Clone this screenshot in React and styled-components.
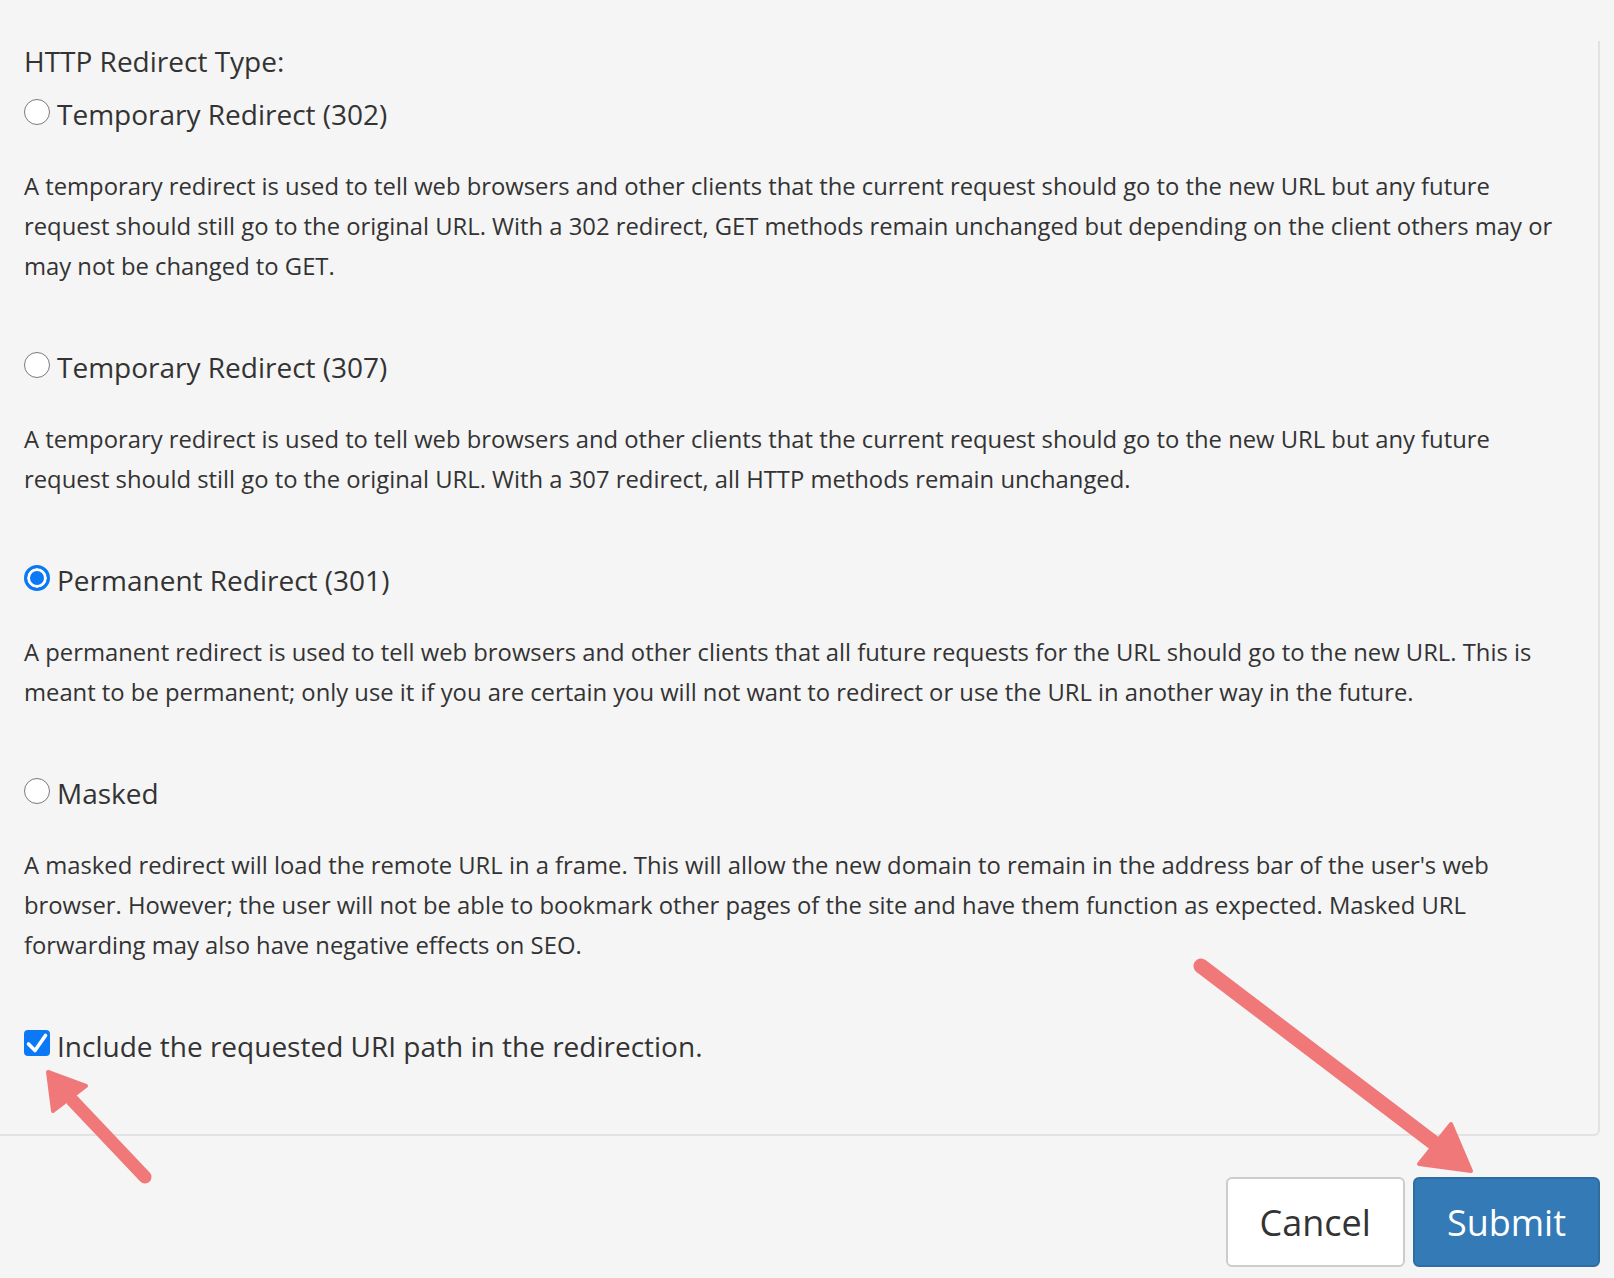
import React, { useState } from 'react';
import styled, { createGlobalStyle } from 'styled-components';

const GlobalStyle = createGlobalStyle`
  html, body {
    margin: 0;
    padding: 0;
    background: #f5f5f5;
  }
  body {
    font-family: "Open Sans", "Liberation Sans", sans-serif;
    color: #333;
  }
`;

const Page = styled.div`
  position: relative;
  width: 1614px;
  height: 1278px;
  overflow: hidden;
  box-sizing: border-box;
  padding-top: 41px;
`;

const Panel = styled.div`
  width: 1600px;
  box-sizing: border-box;
  padding: 0 26px 68px 24px;
  border-right: 2px solid #e2e2e2;
  border-bottom: 2px solid #e2e2e2;
  border-bottom-right-radius: 6px;
`;

const Heading = styled.div`
  font-size: 28px;
  line-height: 40px;
  margin-bottom: 13px;
`;

const Option = styled.div`
  margin-bottom: 61px;
`;

const OptionRow = styled.label`
  display: flex;
  align-items: center;
  gap: 7px;
  font-size: 28px;
  line-height: 40px;
  cursor: pointer;
`;

const Radio = styled.input.attrs({ type: 'radio' })`
  appearance: none;
  -webkit-appearance: none;
  margin: 0;
  margin-top: -4px;
  width: 26px;
  height: 26px;
  flex: none;
  box-sizing: border-box;
  border-radius: 50%;
  border: 1.5px solid #7a7a7a;
  background: #fff;

  &:checked {
    border: 3px solid #0b78f6;
    background: #0b78f6;
    box-shadow: inset 0 0 0 3px #fff;
  }
`;

const Description = styled.p`
  margin: 32px 0 0;
  font-size: 23.8px;
  line-height: 40px;
`;

const CheckRow = styled(OptionRow)`
  gap: 7px;
`;

const CheckBox = styled.span`
  display: flex;
  align-items: center;
  justify-content: center;
  width: 26px;
  height: 26px;
  margin-top: -6px;
  flex: none;
  border-radius: 4px;
  background: ${p => (p.checked ? '#0b78f6' : '#fff')};
  border: ${p => (p.checked ? 'none' : '1.5px solid #7a7a7a')};
  box-sizing: border-box;
`;

const Footer = styled.div`
  display: flex;
  justify-content: flex-end;
  gap: 8px;
  width: 1600px;
  margin-top: 41px;
`;

const Button = styled.button`
  height: 90px;
  padding: 0 32px;
  box-sizing: border-box;
  font-family: "Open Sans", "Liberation Sans", sans-serif;
  font-size: 36px;
  border-radius: 6px;
  cursor: pointer;
  border: 2px solid ${p => (p.primary ? '#2e6da4' : '#ccc')};
  background: ${p => (p.primary ? '#337ab7' : '#fff')};
  color: ${p => (p.primary ? '#fff' : '#333')};
`;

const Overlay = styled.svg`
  position: absolute;
  left: 0;
  top: 0;
  pointer-events: none;
`;

const options = [
  {
    id: '302',
    label: 'Temporary Redirect (302)',
    text: 'A temporary redirect is used to tell web browsers and other clients that the current request should go to the new URL but any future request should still go to the original URL. With a 302 redirect, GET methods remain unchanged but depending on the client others may or may not be changed to GET.',
  },
  {
    id: '307',
    label: 'Temporary Redirect (307)',
    text: 'A temporary redirect is used to tell web browsers and other clients that the current request should go to the new URL but any future request should still go to the original URL. With a 307 redirect, all HTTP methods remain unchanged.',
  },
  {
    id: '301',
    label: 'Permanent Redirect (301)',
    text: 'A permanent redirect is used to tell web browsers and other clients that all future requests for the URL should go to the new URL. This is meant to be permanent; only use it if you are certain you will not want to redirect or use the URL in another way in the future.',
  },
  {
    id: 'masked',
    label: 'Masked',
    text: "A masked redirect will load the remote URL in a frame. This will allow the new domain to remain in the address bar of the user's web browser. However; the user will not be able to bookmark other pages of the site and have them function as expected. Masked URL forwarding may also have negative effects on SEO.",
  },
];

function Arrows() {
  const red = '#f07878';
  return (
    <Overlay width="1614" height="1278" viewBox="0 0 1614 1278">
      {/* arrow to submit */}
      <line x1="1201" y1="966" x2="1438" y2="1146" stroke={red} strokeWidth="15" strokeLinecap="round" />
      <polygon
        points="1471,1171 1451,1124 1419,1164"
        fill={red}
        stroke={red}
        strokeWidth="4"
        strokeLinejoin="round"
      />
      {/* arrow to checkbox */}
      <line x1="145" y1="1177" x2="72" y2="1100" stroke={red} strokeWidth="13" strokeLinecap="round" />
      <polygon
        points="48,1072 86,1086 53,1111"
        fill={red}
        stroke={red}
        strokeWidth="4"
        strokeLinejoin="round"
      />
    </Overlay>
  );
}

export default function App() {
  const [type, setType] = useState('301');
  const [includePath, setIncludePath] = useState(true);

  return (
    <Page>
      <GlobalStyle />
      <Panel>
        <Heading>HTTP Redirect Type:</Heading>
        {options.map(o => (
          <Option key={o.id}>
            <OptionRow>
              <Radio name="redirect" checked={type === o.id} onChange={() => setType(o.id)} />
              {o.label}
            </OptionRow>
            <Description>{o.text}</Description>
          </Option>
        ))}
        <CheckRow onClick={() => setIncludePath(!includePath)}>
          <CheckBox checked={includePath}>
            {includePath && (
              <svg width="26" height="26" viewBox="0 0 26 26">
                <polyline
                  points="4.5,14 11,20.5 21.5,5.5"
                  fill="none"
                  stroke="#fff"
                  strokeWidth="3.6"
                  strokeLinecap="round"
                  strokeLinejoin="round"
                />
              </svg>
            )}
          </CheckBox>
          Include the requested URI path in the redirection.
        </CheckRow>
      </Panel>
      <Footer>
        <Button>Cancel</Button>
        <Button primary>Submit</Button>
      </Footer>
      <Arrows />
    </Page>
  );
}
